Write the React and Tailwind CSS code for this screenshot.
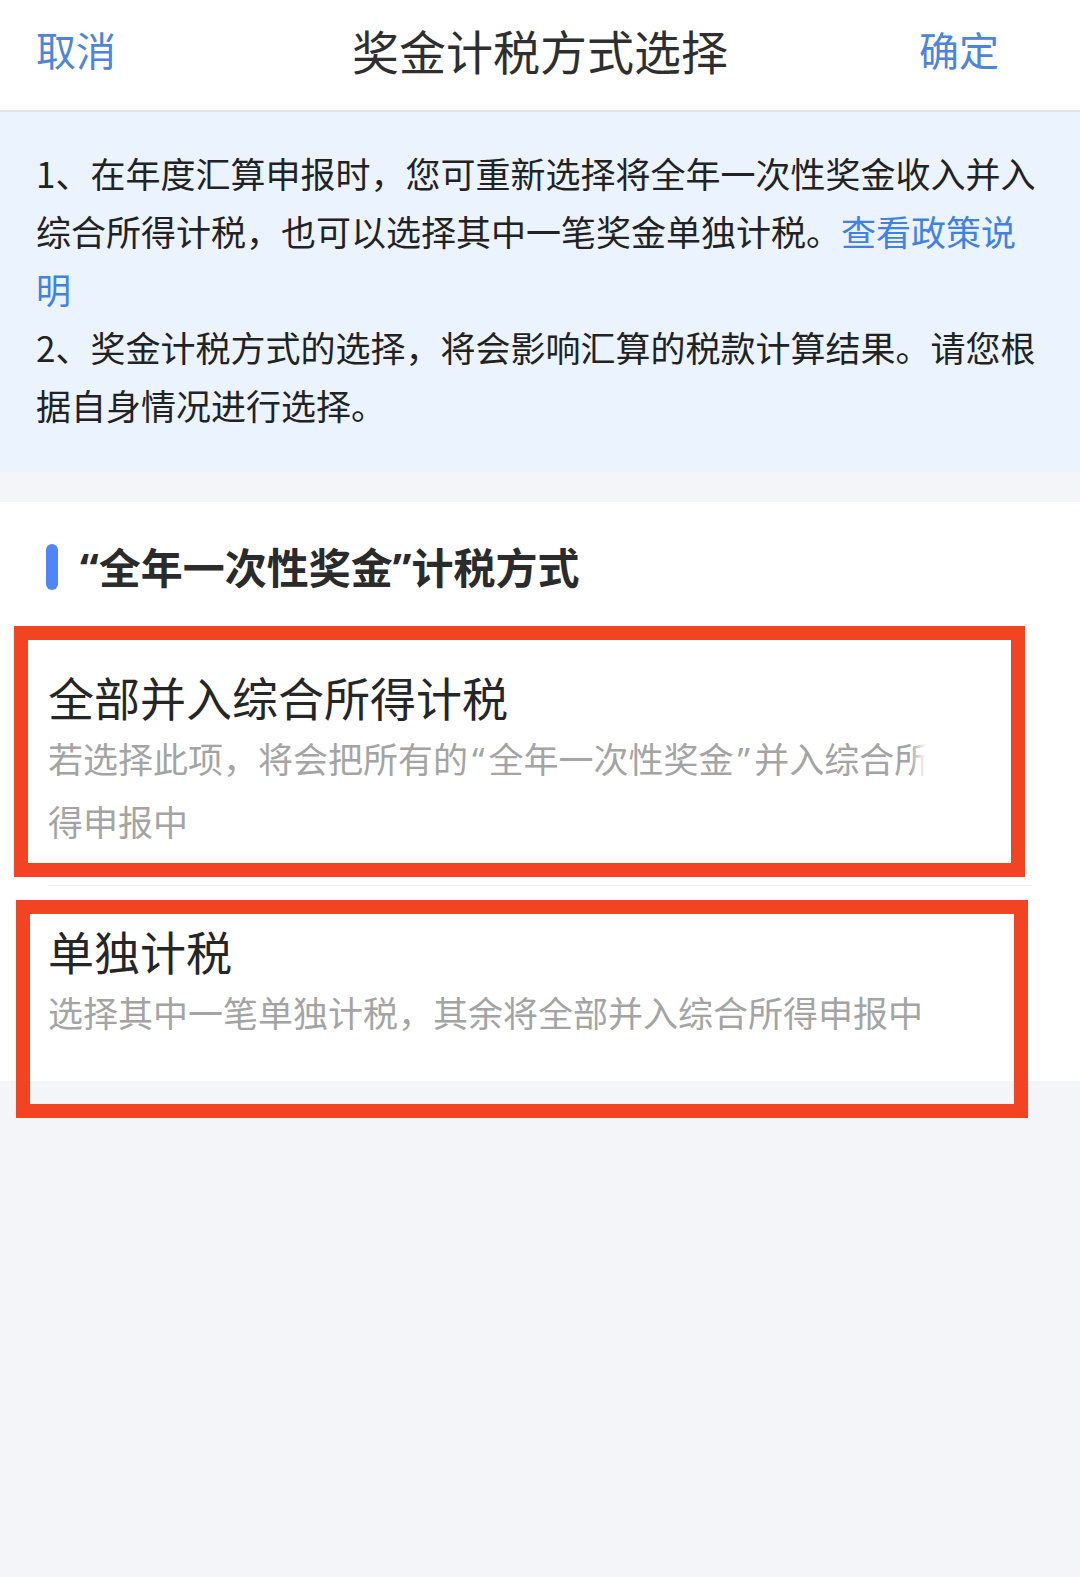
import React from 'react';

// proportional curly quotes, the CJK font draws them full-width
const Q = ({ children, className = '' }) => (
  <span className={`font-['Noto_Sans',sans-serif] ${className}`}>{children}</span>
);

const options = [
  {
    title: '全部并入综合所得计税',
    desc: (
      <>
        若选择此项，将会把所有的<Q className="mx-[4px]">“</Q>全年一次性奖金<Q className="mx-[4px]">”</Q>并入综合所得申报中
      </>
    ),
    fade: true,
  },
  {
    title: '单独计税',
    desc: '选择其中一笔单独计税，其余将全部并入综合所得申报中',
    fade: false,
  },
];

const App = () => {
  return (
    <div className="min-h-[1577px] bg-[#f4f5f9] font-['Noto_Sans_CJK_SC','Noto_Sans',sans-serif]" lang="zh-CN">
      {/* header */}
      <div className="h-[112px] bg-white border-b-2 border-[#e6e6e8] shadow-[0_1px_2px_rgba(0,0,0,0.04)]">
        <div className="h-[98px] grid grid-cols-[1fr_auto_1fr] items-center px-[36px]">
          <span className="text-[40px] leading-none text-[#4d86d9]">取消</span>
          <span className="text-[47px] leading-none text-[#2f2f2f]">奖金计税方式选择</span>
          <span className="justify-self-end mr-[45px] text-[40px] leading-none text-[#4d86d9]">确定</span>
        </div>
      </div>

      {/* tips */}
      <div className="bg-[#eaf3fe] px-[36px] pt-[32px] pb-[38px] text-[35px] leading-[58px] text-[#222222]">
        <p>
          1、在年度汇算申报时，您可重新选择将全年一次性奖金收入并入综合所得计税，也可以选择其中一笔奖金单独计税。
          <span className="text-[#3f82e4]">查看政策说明</span>
        </p>
        <p>2、奖金计税方式的选择，将会影响汇算的税款计算结果。请您根据自身情况进行选择。</p>
      </div>
      <div className="h-[30px] bg-[#f4f5f9]" />

      {/* options */}
      <div className="bg-white pt-[42px]">
        <div className="flex items-center h-[46px] pl-[46px]">
          <div className="w-[12px] h-[46px] rounded-full bg-[#4f86f7]" />
          <span className="ml-[22px] text-[42px] leading-none font-bold text-[#2b2b2b]">
            <Q>“</Q>全年一次性奖金<Q>”</Q>计税方式
          </span>
        </div>

        <div className="mt-[42px]">
          {options.map((opt, i) => (
            <div key={opt.title}>
              {i > 0 && <div className="mx-[48px] h-px bg-[#eeeeee]" />}
              <div className={`relative px-[48px] pt-[36px] ${i === 0 ? 'pb-[34px]' : 'pb-[39px]'}`}>
                <div className="text-[46px] leading-[56px] text-[#262626]">{opt.title}</div>
                <div className="w-[900px] mt-[3px] text-[35px] leading-[61px] text-[#a4a4a4]">{opt.desc}</div>
                {opt.fade && (
                  <div className="absolute left-[910px] top-[95px] w-[102px] h-[64px] bg-gradient-to-r from-white/0 to-white to-[16%]" />
                )}
                {/* red highlight box */}
                {i === 0 ? (
                  <div className="absolute left-[14px] top-[-6px] w-[1011px] h-[251px] border-[14px] border-[#f24323] pointer-events-none" />
                ) : (
                  <div className="absolute left-[16px] top-[14px] w-[1012px] h-[218px] border-[14px] border-[#f24323] pointer-events-none" />
                )}
              </div>
            </div>
          ))}
        </div>
      </div>
    </div>
  );
};

export default App;
